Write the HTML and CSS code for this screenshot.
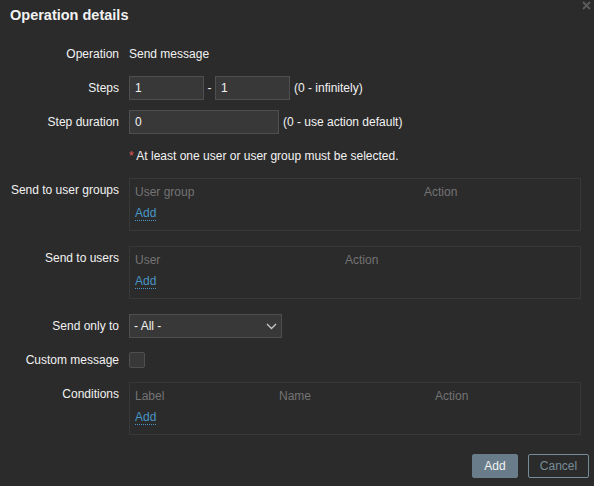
FILE: index.html
```html
<!DOCTYPE html>
<html lang="en">
<head>
  <meta charset="UTF-8">
  <title>Operation details</title>
  <link rel="stylesheet" href="styles.css">
</head>
<body>
  <div class="dialog">
    <div class="dialog-head">
      <h4>Operation details</h4>
      <button class="close" title="Close">
        <svg width="9" height="9" viewBox="0 0 9 9"><path d="M1 1 L8 8 M8 1 L1 8" stroke="#5a5a5a" stroke-width="2"/></svg>
      </button>
    </div>

    <div class="form-grid">
      <label class="lbl">Operation</label>
      <div class="field text">Send message</div>

      <label class="lbl">Steps</label>
      <div class="field">
        <input class="input small" type="text" value="1">
        <span class="dash">-</span>
        <input class="input small" type="text" value="1">
        <span class="hint">(0 - infinitely)</span>
      </div>

      <label class="lbl">Step duration</label>
      <div class="field">
        <input class="input wide" type="text" value="0">
        <span class="hint">(0 - use action default)</span>
      </div>

      <div class="lbl"></div>
      <div class="field text"><span><span class="req">*</span> At least one user or user group must be selected.</span></div>

      <label class="lbl top">Send to user groups</label>
      <div class="field">
        <div class="table-box">
          <div class="thead">
            <span class="col" style="width: 289px">User group</span>
            <span class="col">Action</span>
          </div>
          <a class="link" href="#">Add</a>
        </div>
      </div>

      <label class="lbl top">Send to users</label>
      <div class="field">
        <div class="table-box">
          <div class="thead">
            <span class="col" style="width: 210px">User</span>
            <span class="col">Action</span>
          </div>
          <a class="link" href="#">Add</a>
        </div>
      </div>

      <label class="lbl">Send only to</label>
      <div class="field">
        <div class="select">
          <span>- All -</span>
          <svg width="11" height="7" viewBox="0 0 11 7"><path d="M1 1 L5.5 5.5 L10 1" fill="none" stroke="#c8c8c8" stroke-width="1.3"/></svg>
        </div>
      </div>

      <label class="lbl">Custom message</label>
      <div class="field">
        <span class="checkbox"></span>
      </div>

      <label class="lbl top">Conditions</label>
      <div class="field">
        <div class="table-box">
          <div class="thead">
            <span class="col" style="width: 144px">Label</span>
            <span class="col" style="width: 156px">Name</span>
            <span class="col">Action</span>
          </div>
          <a class="link" href="#">Add</a>
        </div>
      </div>
    </div>

    <div class="dialog-foot">
      <button class="btn primary">Add</button>
      <button class="btn alt">Cancel</button>
    </div>
  </div>
</body>
</html>
```

FILE: styles.css
```css
body {
  margin: 0;
  background-color: #2b2b2b;
  color: #f2f2f2;
  font-family: "Liberation Sans", Arial, sans-serif;
  font-size: 12px;
}

.dialog {
  width: 594px;
  height: 486px;
  box-sizing: border-box;
  position: relative;
}

.dialog-head {
  padding: 6px 10px 0 10px;
  height: 36px;
  box-sizing: border-box;
}

.dialog-head h4 {
  margin: 0;
  font-size: 14.5px;
  font-weight: bold;
  line-height: 18px;
  color: #f2f2f2;
}

.close {
  position: absolute;
  top: 0;
  right: 2px;
  width: 11px;
  height: 11px;
  padding: 0;
  background: transparent;
  border: none;
  line-height: 0;
}

.form-grid {
  display: grid;
  grid-template-columns: 119px 452px;
  column-gap: 10px;
  row-gap: 10px;
  margin-top: 6px;
}

.lbl {
  text-align: right;
  line-height: 24px;
  white-space: nowrap;
}

.lbl.top {
  line-height: 14px;
  padding-top: 5px;
}

.field {
  display: flex;
  align-items: center;
  min-height: 24px;
}

.field.text {
  line-height: 24px;
}

.input {
  height: 24px;
  box-sizing: border-box;
  background-color: #383838;
  border: 1px solid #4f4f4f;
  color: #f2f2f2;
  font-family: inherit;
  font-size: 12px;
  padding: 0 5px;
  outline: none;
}

.input.small {
  width: 75px;
}

.input.wide {
  width: 150px;
}

.dash {
  width: 11px;
  text-align: center;
}

.hint {
  margin-left: 4px;
}

.req {
  color: #e45959;
}

.table-box {
  width: 453px;
  height: 53px;
  box-sizing: border-box;
  border: 1px solid #383838;
  padding: 5px 5px 0 5px;
  margin-bottom: 5px;
}

.thead {
  display: flex;
  color: #737373;
  line-height: 16px;
}

.col {
  display: inline-block;
}

.link {
  display: inline-block;
  margin-top: 6px;
  color: #4796c4;
  text-decoration: none;
  border-bottom: 1px dotted #4796c4;
  line-height: 14px;
}

.select {
  width: 153px;
  height: 24px;
  box-sizing: border-box;
  background-color: #383838;
  border: 1px solid #4f4f4f;
  display: flex;
  align-items: center;
  justify-content: space-between;
  padding: 0 4px 0 4px;
}

.checkbox {
  width: 16px;
  height: 16px;
  box-sizing: border-box;
  background-color: #383838;
  border: 1px solid #4f4f4f;
  border-radius: 2px;
}

.dialog-foot {
  display: flex;
  justify-content: flex-end;
  gap: 10px;
  padding: 0 5px 0 0;
  margin-top: 14px;
}

.btn {
  height: 24px;
  font-family: inherit;
  font-size: 12px;
  padding: 0 10px;
  border-radius: 2px;
}

.btn.primary {
  width: 46px;
  background-color: #687c8a;
  border: 1px solid #687c8a;
  color: #f2f2f2;
}

.btn.alt {
  width: 61px;
  background-color: transparent;
  border: 1px solid #768d99;
  color: #768d99;
}
```
